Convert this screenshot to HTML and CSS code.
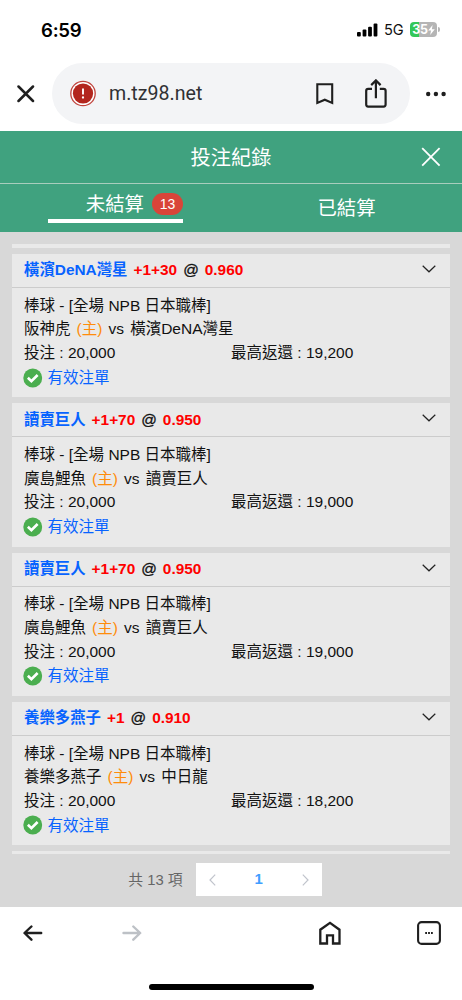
FILE: index.html
```html
<!DOCTYPE html>
<html lang="zh-Hant">
<head>
<meta charset="utf-8">
<meta name="viewport" content="width=device-width, initial-scale=1">
<title>投注紀錄</title>
<link rel="stylesheet" href="styles.css">
</head>
<body>
<svg width="0" height="0" class="defs">
  <symbol id="check" viewBox="0 0 20 20"><circle cx="10" cy="10" r="9.7" fill="#4bae4f"/><path d="M5 9.8 8.6 13.2 15 6.9" fill="none" stroke="#fff" stroke-width="2.7"/></symbol>
  <symbol id="down" viewBox="0 0 14 8"><path d="M.7.8 7 6.8 13.3.8" fill="none" stroke="#222" stroke-width="1.2"/></symbol>
</svg>
<header class="status">
  <span class="time">6:59</span>
  <svg class="signal" width="21" height="14" viewBox="0 0 21 14"><rect x="0" y="9" width="3.8" height="4.6" rx="1"/><rect x="5.6" y="6.6" width="3.8" height="7" rx="1"/><rect x="11.1" y="3.8" width="3.8" height="9.8" rx="1"/><rect x="16.6" y=".4" width="3.8" height="13.2" rx="1"/></svg>
  <span class="net">5G</span>
  <span class="battery"><span>35</span><svg width="7" height="10" viewBox="0 0 7 10"><path d="M4.6 0 .2 5.6H3L2.2 10 6.8 4.2H3.9Z" fill="#fff"/></svg></span>
  <span class="nub"></span>
</header>
<nav class="browser">
  <svg class="close" width="18" height="18" viewBox="0 0 18 18"><path d="M1.5 1.5 16 16M16 1.5 1.5 16" fill="none" stroke="#1f1f1f" stroke-width="2.5" stroke-linecap="round"/></svg>
  <div class="address">
    <svg width="26" height="27" viewBox="0 0 26 27"><circle cx="13" cy="13.5" r="12.2" fill="#fff" stroke="#c0443d" stroke-width="1.3"/><circle cx="13" cy="13.5" r="10.1" fill="#b3261e"/><path d="M13 8.6v6" stroke="#fff" stroke-width="1.9"/><circle cx="13" cy="17.5" r="1.15" fill="#fff"/></svg>
    <span class="host">m.tz98.net</span>
    <svg class="mark" width="18" height="22" viewBox="0 0 18 22"><path d="M1.3 1.2H16.2V20L8.8 16.7 1.3 20Z" fill="none" stroke="#1f1f1f" stroke-width="2.1"/></svg>
    <svg class="share" width="22" height="29" viewBox="0 0 22 29"><path d="M7 9.8H3.2Q1.2 9.8 1.2 11.8V25.6Q1.2 27.6 3.2 27.6H18.6Q20.6 27.6 20.6 25.6V11.8Q20.6 9.8 18.6 9.8H14.8M10.9 19.2V1.5M6.2 6.1 10.9 1.4 15.6 6.1" fill="none" stroke="#1f1f1f" stroke-width="2.2"/></svg>
  </div>
  <svg class="more" width="20" height="6" viewBox="0 0 20 6"><circle cx="2.2" cy="3" r="2.2"/><circle cx="9.9" cy="3" r="2.2"/><circle cx="17.6" cy="3" r="2.2"/></svg>
</nav>
<section class="title"><h1>投注紀錄</h1>
  <svg width="20" height="20" viewBox="0 0 20 20"><path d="M1.2 1.2 18.6 18.6M18.6 1.2 1.2 18.6" stroke="#fff" stroke-width="1.8"/></svg>
</section>
<section class="tabs">
  <div class="tab"><div class="active">未結算<span class="badge">13</span></div></div>
  <div class="tab">已結算</div>
</section>
<main>
  <div class="strip"></div>
  <article>
    <h2><span class="team">橫濱DeNA灣星</span><span class="odds">+1+30</span><span class="at">@</span><span class="odds">0.960</span><svg><use href="#down"/></svg></h2>
    <div class="detail"><p>棒球 - [全場 NPB 日本職棒]</p><p class="match"><span>阪神虎</span><span class="home">(主)</span><span>vs</span><span>橫濱DeNA灣星</span></p><p class="stake"><span>投注 : 20,000</span><span>最高返還 : 19,200</span></p><p class="valid"><svg><use href="#check"/></svg>有效注單</p></div>
  </article>
  <article>
    <h2><span class="team">讀賣巨人</span><span class="odds">+1+70</span><span class="at">@</span><span class="odds">0.950</span><svg><use href="#down"/></svg></h2>
    <div class="detail"><p>棒球 - [全場 NPB 日本職棒]</p><p class="match"><span>廣島鯉魚</span><span class="home">(主)</span><span>vs</span><span>讀賣巨人</span></p><p class="stake"><span>投注 : 20,000</span><span>最高返還 : 19,000</span></p><p class="valid"><svg><use href="#check"/></svg>有效注單</p></div>
  </article>
  <article>
    <h2><span class="team">讀賣巨人</span><span class="odds">+1+70</span><span class="at">@</span><span class="odds">0.950</span><svg><use href="#down"/></svg></h2>
    <div class="detail"><p>棒球 - [全場 NPB 日本職棒]</p><p class="match"><span>廣島鯉魚</span><span class="home">(主)</span><span>vs</span><span>讀賣巨人</span></p><p class="stake"><span>投注 : 20,000</span><span>最高返還 : 19,000</span></p><p class="valid"><svg><use href="#check"/></svg>有效注單</p></div>
  </article>
  <article>
    <h2><span class="team">養樂多燕子</span><span class="odds">+1</span><span class="at">@</span><span class="odds">0.910</span><svg><use href="#down"/></svg></h2>
    <div class="detail"><p>棒球 - [全場 NPB 日本職棒]</p><p class="match"><span>養樂多燕子</span><span class="home">(主)</span><span>vs</span><span>中日龍</span></p><p class="stake"><span>投注 : 20,000</span><span>最高返還 : 18,200</span></p><p class="valid"><svg><use href="#check"/></svg>有效注單</p></div>
  </article>
  <div class="strip last"></div>
  <div class="pager"><span class="total">共 13 項</span>
    <div class="pages"><svg width="7" height="12" viewBox="0 0 7 12"><path d="M6.2.7 1 6 6.2 11.3" fill="none" stroke="#c0c4cc" stroke-width="1.2"/></svg><b>1</b><svg width="7" height="12" viewBox="0 0 7 12"><path d="M.8.7 6 6 .8 11.3" fill="none" stroke="#c0c4cc" stroke-width="1.2"/></svg></div>
  </div>
</main>
<footer>
  <div class="tools">
    <svg width="20" height="16" viewBox="0 0 20 16"><path d="M18.2 8H2M8.4 1.5 1.5 8 8.4 14.7" fill="none" stroke="#1f1f1f" stroke-width="2.4" stroke-linecap="round" stroke-linejoin="round"/></svg>
    <svg class="next" width="20" height="16" viewBox="0 0 20 16"><path d="M1.5 8H18M11.3 1.5 18.2 8 11.3 14.7" fill="none" stroke="#bdc1c6" stroke-width="2.4" stroke-linecap="round" stroke-linejoin="round"/></svg>
    <svg class="house" width="22" height="24" viewBox="0 0 22 24"><path d="M1.3 22.5V8.7L11 1.8 20.5 8.7V22.5H14V14.3H8V22.5Z" fill="none" stroke="#1f1f1f" stroke-width="2.3"/></svg>
    <svg class="grid" width="24" height="24" viewBox="0 0 24 24"><rect x="1.1" y="1.1" width="21.8" height="21.8" rx="3.5" fill="none" stroke="#1f1f1f" stroke-width="2.1"/><path d="M8.2 11.1h1.8v1.8h-1.8zM11.1 11.1h1.8v1.8h-1.8zM14 11.1h1.8v1.8h-1.8z" fill="#1f1f1f"/></svg>
  </div>
  <div class="homebar"></div>
</footer>
</body>
</html>
```

FILE: styles.css
```css
* { box-sizing: border-box; margin: 0; padding: 0; }
body { width: 462px; height: 1000px; overflow: hidden; background: #fff; color: #111; font: 15.5px "Liberation Sans", "Noto Sans CJK TC", sans-serif; }
svg { display: block; flex: none; }
.defs { position: absolute; }
.status { height: 63px; display: flex; align-items: center; padding: 0 22px 4px 41px; }
.time { font: 600 18.6px/24px Inter, sans-serif; color: #000; letter-spacing: -.25px; }
.signal { margin-left: auto; margin-right: 6px; }
.net { font: 400 14.6px/20px Inter, sans-serif; color: #111; letter-spacing: -.2px; width: 20px; margin-right: 6px; }
.battery { width: 27px; height: 15px; border-radius: 4px; background: linear-gradient(90deg, #34c759 35%, #b5b5b5 35%); display: flex; align-items: center; justify-content: center; color: #fff; font: 700 12.5px/15px Inter, sans-serif; letter-spacing: -.3px; }
.nub { width: 2px; height: 5px; margin-left: 1px; border-radius: 0 2px 2px 0; background: #b5b5b5; }
.browser { height: 68.4px; display: flex; align-items: flex-start; }
.close { margin: 22px 17px 0; }
.address { width: 358px; height: 61px; border-radius: 31px; background: #f3f4f6; display: flex; align-items: center; padding-left: 18px; }
.host { margin-left: 13px; width: 207px; font: 19.6px/26px Roboto, sans-serif; color: #303134; letter-spacing: 0; }
.mark { margin-top: 1px; }
.share { margin-left: 31px; }
.more { margin: 28px 0 0 16px; fill: #1f1f1f; }
.title { height: 53px; background: #40a27f; border-bottom: 1px solid #a9cdbd; color: #fff; position: relative; display: flex; justify-content: center; align-items: center; }
.title h1 { font-size: 20.2px; font-weight: 400; line-height: 28px; padding-top: 1px; }
.title svg { position: absolute; left: 421px; top: 16px; }
.tabs { height: 47.6px; display: flex; background: #40a27f; color: #fff; font-size: 19.4px; }
.tab { width: 50%; display: flex; justify-content: center; line-height: 48px; }
.active { width: 135px; height: 38.6px; padding-top: 5px; border-bottom: 4px solid #fff; display: flex; justify-content: flex-end; align-items: center; line-height: 28px; }
.badge { width: 31px; height: 22px; border-radius: 11px; margin-left: 8px; background: #d94439; font-size: 14px; line-height: 22px; text-align: center; }
main { height: 675px; background: #d8d8d8; padding: 12px 12px 0; }
.strip { height: 4px; background: #e9e9e9; margin-bottom: 6px; }
.strip.last { height: 3px; margin: 0 0 9px; }
article { height: 143.3px; margin-bottom: 6px; background: #e9e9e9; }
h2 { height: 34px; border-bottom: 1px solid #ccc; padding: 0 13px 0 12px; display: flex; align-items: center; gap: 6px; font-size: 15.4px; line-height: 24px; }
h2 svg { width: 14px; height: 8px; margin: 0 1px 3px auto; }
.at { font-weight: 400; -webkit-text-stroke: .3px #111; }
.team { color: #0763ff; }
.odds { color: #f00; }
.detail { padding: 5.8px 12px 0; line-height: 23.6px; }
.match { display: flex; gap: 6.1px; }
.home { color: #ff8c0a; }
.stake { display: grid; grid-template-columns: 207px 1fr; }
.valid { display: flex; align-items: center; gap: 5px; height: 26px; margin-left: -1px; color: #0763ff; }
.valid svg { width: 19.5px; height: 20px; }
.pager { display: flex; align-items: center; justify-content: center; gap: 13px; padding-right: 12px; height: 33px; color: #666; font-size: 14.8px; }
.total { margin-top: -3px; }
.pages { width: 126px; height: 33px; padding: 0 13px; background: #fff; display: flex; align-items: center; justify-content: space-between; }
.pages b { color: #409eff; font-size: 15px; margin-top: -2px; }
footer { height: 93px; background: #fff; }
.tools { display: flex; align-items: center; height: 53px; padding-left: 23px; }
.next { margin-left: 79px; }
.house { margin-left: 177px; }
.grid { margin-left: 76px; }
.homebar { width: 165px; height: 6px; margin: 24px auto 0; border-radius: 3px; background: #000; }
```
